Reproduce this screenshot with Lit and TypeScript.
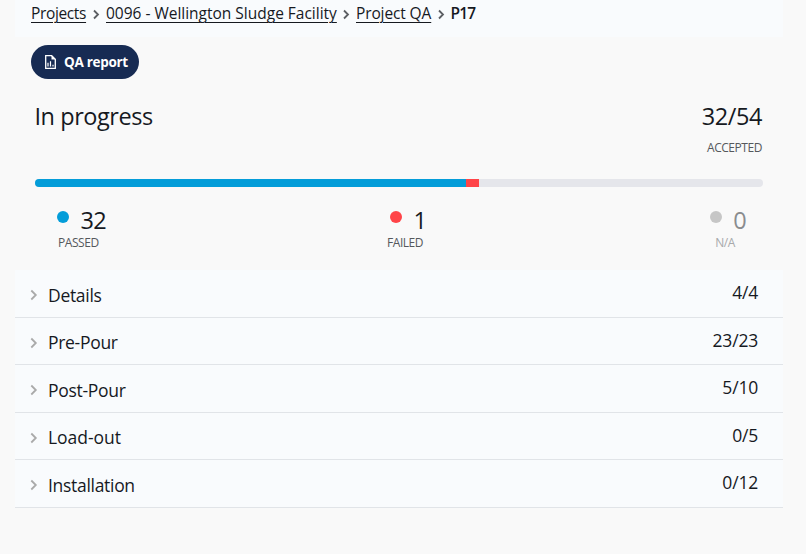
import { LitElement, html, css } from "lit";
import { customElement } from "lit/decorators.js";
import { styleMap } from "lit/directives/style-map.js";

const TOTAL = 54;
const STATS = [
  { key: "passed", count: 32, label: "PASSED" },
  { key: "failed", count: 1, label: "FAILED" },
  { key: "na", count: 0, label: "N/A" },
];
const SECTIONS = [
  { key: "details", name: "Details", count: "4/4" },
  { key: "pre", name: "Pre-Pour", count: "23/23" },
  { key: "post", name: "Post-Pour", count: "5/10" },
  { key: "load", name: "Load-out", count: "0/5" },
  { key: "install", name: "Installation", count: "0/12" },
];

const share = (n: number) => ({ width: `${(n / TOTAL) * 100}%` });

@customElement("app-root")
export class AppRoot extends LitElement {
  static styles = css`
    :host {
      display: block;
      box-sizing: border-box;
      height: 554px;
      padding: 0 23px 0 15px;
      overflow: hidden;
      background: #f9f9f9;
      color: #16191f;
      font-family: "Open Sans", "Noto Sans", sans-serif;
      white-space: nowrap;
    }
    svg { display: block; flex: none; fill: none; }
    .crumbs {
      display: flex;
      height: 37px;
      padding-left: 16px;
      background: #f9fbfd;
      font-size: 15.5px;
      line-height: 26px;
    }
    .crumbs a, .crumbs b { display: block; flex: none; }
    .crumbs a {
      text-decoration: underline;
      text-decoration-thickness: 1px;
      text-underline-offset: 3px;
    }
    .projects { width: 56px; letter-spacing: -0.36px; }
    .facility { width: 231px; letter-spacing: -0.01px; }
    .qa { width: 76px; letter-spacing: -0.12px; }
    .crumbs b { margin-left: -0.4px; font-weight: 600; letter-spacing: -0.9px; }
    .sep { width: 19px; height: 28px; stroke: #5c5f63; stroke-width: 1.8; }
    .report {
      display: flex;
      align-items: center;
      box-sizing: border-box;
      width: 108px;
      height: 34px;
      margin: 8px 0 0 16px;
      padding: 0 0 0 13px;
      border: 0;
      border-radius: 17px;
      background: #172b53;
      color: #fff;
      font: 700 13.5px/34px "Open Sans", "Noto Sans", sans-serif;
      letter-spacing: -0.3px;
    }
    .report svg { margin-right: 7px; stroke: #fff; }
    .summary {
      display: flex;
      justify-content: space-between;
      height: 100px;
      padding: 0 21px 0 19.5px;
    }
    h1 {
      margin: 20px 0 0;
      font-size: 23.5px;
      font-weight: 400;
      line-height: 34px;
      letter-spacing: -0.45px;
    }
    .accepted { text-align: right; }
    .total {
      margin-top: 20px;
      font-size: 23.5px;
      line-height: 34px;
      letter-spacing: -0.4px;
    }
    .caption {
      color: #55585c;
      font-size: 12px;
      line-height: 16px;
      letter-spacing: -0.45px;
    }
    .accepted .caption { margin-top: 7px; }
    .bar {
      display: flex;
      height: 8px;
      margin: 0 20px;
      border-radius: 4px;
      overflow: hidden;
      background: #e5e6eb;
    }
    .bar .passed { background: #049dd9; }
    .bar .failed {
      box-sizing: border-box;
      border-right: 1px solid #e5e6eb;
      background: #ff4448;
    }
    .stats {
      display: flex;
      justify-content: space-between;
      box-sizing: border-box;
      height: 83px;
      padding: 16px 36px 0 42px;
    }
    .figure {
      display: flex;
      height: 32px;
      font-size: 23.5px;
      line-height: 34px;
      letter-spacing: -0.6px;
    }
    .dot {
      width: 12px;
      height: 12px;
      margin: 8px 11.5px 0 0;
      border-radius: 50%;
    }
    .stat.passed .dot { background: #049dd9; }
    .stat.failed .dot { background: #ff4448; }
    .stat.na .dot { margin-right: 11px; background: #c6c6c6; }
    .stat.na .figure { padding-right: 1px; color: #8a8c8f; }
    .stat.passed .caption { margin-left: 1px; }
    .stat.failed .caption { margin-left: -3px; }
    .stat.na .caption { margin-left: 5px; color: #a8a9ab; }
    .sections {
      display: grid;
      grid-template-rows: 48px 47px 48px 47px 48px;
      background: #f9fbfd;
    }
    .row {
      display: flex;
      align-items: flex-start;
      box-sizing: border-box;
      padding: 0 25px 0 14px;
      border-bottom: 1px solid #e1e4e8;
      font-size: 17.5px;
    }
    .row svg { margin-top: 18px; stroke: #aaa; stroke-width: 1.8; }
    .name { flex: 1; margin-left: 9px; line-height: 51px; letter-spacing: -0.3px; }
    .name.pre { line-height: 49px; }
    .name.load { line-height: 49px; letter-spacing: -0.05px; }
    .count { line-height: 44px; letter-spacing: -0.2px; }
  `;

  private sep() {
    return html`<svg class="sep" viewBox="0 0 19 28"><path d="M7 10.5 11 14.5 7 18.5" /></svg>`;
  }

  render() {
    return html`
      <nav class="crumbs">
        <a class="projects">Projects</a>${this.sep()}
        <a class="facility">0096 - Wellington Sludge Facility</a>${this.sep()}
        <a class="qa">Project QA</a>${this.sep()}
        <b>P17</b>
      </nav>
      <button class="report">
        <svg width="13" height="16" viewBox="0 0 13 16">
          <path stroke-width="1.3" d="M1.7 1.7H7.7L11.3 5.3V14.3H1.7Z" />
          <path fill="#fff" stroke="none" d="M7.5 1.5V5.5H11.5ZM3.4 8.8H4.6V12.6H3.4ZM5.9 7.2H7.1V12.6H5.9ZM8.4 10.8H9.6V12.6H8.4Z" />
        </svg><span>QA report</span>
      </button>
      <div class="summary">
        <h1>In progress</h1>
        <div class="accepted">
          <div class="total">32/54</div>
          <div class="caption">ACCEPTED</div>
        </div>
      </div>
      <div class="bar">
        <div class="passed" style=${styleMap(share(STATS[0].count))}></div>
        <div class="failed" style=${styleMap(share(STATS[1].count))}></div>
      </div>
      <div class="stats">
        ${STATS.map((s) => html`<div class="stat ${s.key}">
          <div class="figure"><i class="dot"></i><span>${s.count}</span></div>
          <div class="caption">${s.label}</div>
        </div>`)}
      </div>
      <div class="sections">
        ${SECTIONS.map((s) => html`<div class="row">
          <svg width="10" height="14" viewBox="0 0 10 14"><path d="M2.3 2.5 6.8 7 2.3 11.5" /></svg>
          <span class="name ${s.key}">${s.name}</span><span class="count">${s.count}</span>
        </div>`)}
      </div>
    `;
  }
}
